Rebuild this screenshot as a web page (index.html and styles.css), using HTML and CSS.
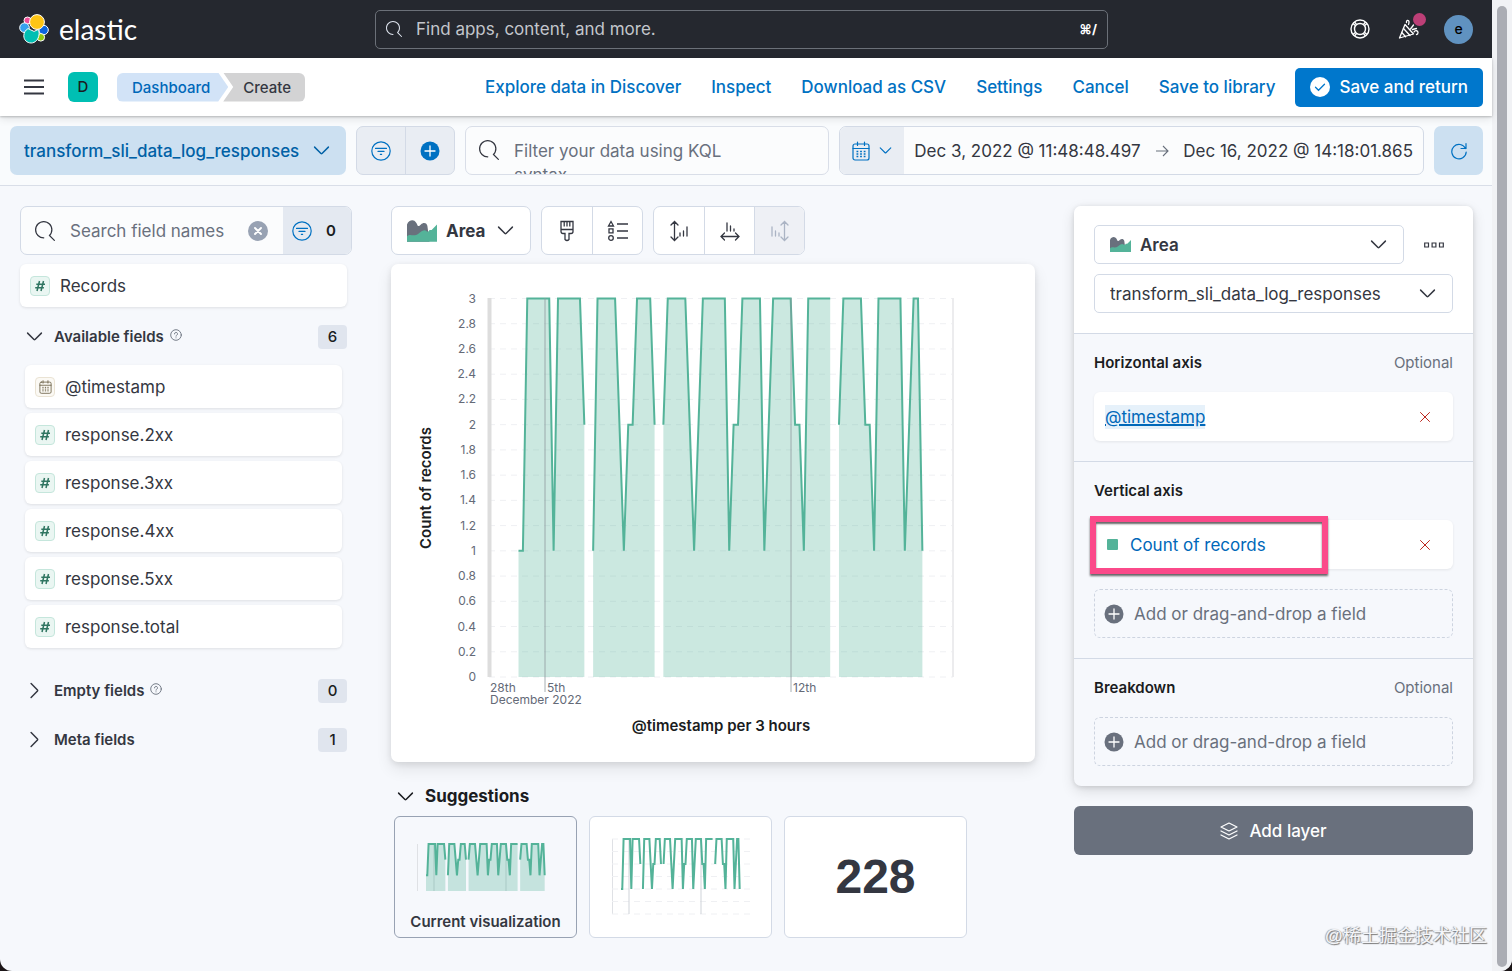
FILE: index.html
```html
<!DOCTYPE html>
<html lang="en">
<head>
<meta charset="utf-8">
<title>Create - Elastic</title>
<link rel="stylesheet" href="styles.css">
</head>
<body>

<!-- icon sprite -->
<svg class="sprite" width="0" height="0">
	<symbol id="i-down" viewBox="0 0 16 16"><path d="M1.5 4.8L7.5 10.8Q8 11.2 8.5 10.8L14.5 4.8" fill="none" stroke="currentColor" stroke-width="1.4" stroke-linecap="round"/></symbol>
	<symbol id="i-right" viewBox="0 0 16 16"><path d="M4.8 1.5L10.8 7.5Q11.2 8 10.8 8.5L4.8 14.5" fill="none" stroke="currentColor" stroke-width="1.4" stroke-linecap="round"/></symbol>
	<symbol id="i-search" viewBox="0 0 16 16"><path fill="currentColor" d="M11.271 11.978l3.872 3.873a.502.502 0 00.708 0 .502.502 0 000-.708l-3.565-3.564c2.38-2.747 2.267-6.923-.342-9.532-2.73-2.73-7.17-2.73-9.898 0-2.728 2.729-2.728 7.17 0 9.9a6.955 6.955 0 004.949 2.05.5.5 0 000-1 5.96 5.96 0 01-4.242-1.757 6.01 6.01 0 010-8.486 6.004 6.004 0 018.484 0 6.01 6.01 0 010 8.486.5.5 0 00-.034.738z"/></symbol>
	<symbol id="i-filter" viewBox="0 0 20 20"><g fill="none" stroke="currentColor" stroke-width="1.2" stroke-linecap="round"><circle cx="10" cy="10" r="9.2"/><path d="M4.5 7.4h11M7 10.4h6M9.4 13.4h1.2"/></g></symbol>
	<symbol id="i-plus" viewBox="0 0 20 20"><circle cx="10" cy="10" r="9.5" fill="currentColor"/><path d="M10 5v10M5 10h10" stroke="#fff" stroke-width="1.3" stroke-linecap="round"/></symbol>
	<symbol id="i-cross" viewBox="0 0 12 12"><path d="M1.5 1.5l9 9M10.5 1.5l-9 9" fill="none" stroke="currentColor" stroke-width="1" stroke-linecap="round"/></symbol>
	<symbol id="i-clear" viewBox="0 0 20 20"><circle cx="10" cy="10" r="10" fill="#98a2b3"/><path d="M7 7l6 6M13 7l-6 6" stroke="#fff" stroke-width="1.9" stroke-linecap="round"/></symbol>
	<symbol id="i-calendar" viewBox="0 0 18 20"><g fill="none" stroke="currentColor" stroke-width="1.2" stroke-linecap="round"><rect x="1" y="3" width="16" height="16" rx="2"/><path d="M1 7.5h16M5.5 1v3.500M12.5 1v3.500"/><path d="M4.5 10.5h9M4.5 13h9M4.5 15.5h9" stroke-width="1.4" stroke-linecap="butt" stroke-dasharray="1.8 1.8"/></g></symbol>
	<symbol id="i-area" viewBox="0 0 28 20"><path fill="#69707d" d="M0 20V4C1 1 3 0 5 0c3 0 4 3 5 5 1 1 2 0 3-1 2-2 5-2 6 1l2 15z"/><path fill="#54b399" d="M0 20v-5c2-2 4-1 6-1 4 0 5-2 8-4 2-1 3-1 4 0 1 1 2 1 3-1l2 0 5-5v16z"/></symbol>
	<symbol id="i-hash" viewBox="0 0 12 12"><path d="M5.500 1L3 11M9.500 1L7 11M2.300 4.200h8.700M1.200 7.800h8.700" fill="none" stroke="currentColor" stroke-width="1.500"/></symbol>
	<symbol id="i-help" viewBox="0 0 12 12"><g fill="none" stroke="currentColor" stroke-width=".9" stroke-linecap="round"><circle cx="6" cy="6" r="5.3"/><path d="M4.500 4.900a1.500 1.500 0 1 1 2.200 1.300c-.5.3-.7.5-.7 1M6 8.800v.1"/></g></symbol>
</svg>

<div class="window">
<div class="app">

	<header class="topbar">
		<a class="logo" href="#">
			<svg width="30" height="30" viewBox="0 0 30 30"><g stroke="#fff" stroke-width="1">
				<circle cx="8.5" cy="6.5" r="3.5" fill="#f04e98"/>
				<circle cx="5.5" cy="13.7" r="4.8" fill="#36a2ef"/>
				<circle cx="24.6" cy="16" r="4.700" fill="#0b64dd"/>
				<circle cx="21.800" cy="23.300" r="3.800" fill="#93c90e"/>
				<circle cx="18" cy="8" r="7.400" fill="#fec514"/>
				<path fill="#00bfb3" d="M9 14.600l6 2.800 4.300-1.900c.8 1.700 1 3.400.7 5.500-.6 4.600-4 8-7.800 8-4.400 0-7.400-3.200-7.400-7.200 0-3 1.600-5.700 4.200-7.200z"/>
			</g></svg>
			<span>elastic</span>
		</a>
		<label class="global-search">
			<svg width="16" height="16"><use href="#i-search"/></svg>
			<input type="search" placeholder="Find apps, content, and more." aria-label="Find apps, content, and more.">
			<kbd>⌘/</kbd>
		</label>
		<div class="top-actions">
			<button class="icon-btn" aria-label="Help">
				<svg width="20" height="20" viewBox="0 0 20 20"><g fill="none" stroke="#fff" stroke-width="1.4"><circle cx="10" cy="10" r="9"/><circle cx="10" cy="10" r="5.5"/><path d="M3 4.500l2.600 2.200M4.500 3l2.200 2.600M17 4.500l-2.600 2.200M15.500 3l-2.200 2.600M3 15.500l2.600-2.200M4.500 17l2.200-2.600M17 15.500l-2.600-2.200M15.500 17l-2.200-2.600"/></g></svg>
			</button>
			<button class="icon-btn news" aria-label="News">
				<svg width="22" height="22" viewBox="0 0 22 22"><g fill="none" stroke="#fff" stroke-width="1.3" stroke-linejoin="round" stroke-linecap="round"><path d="M1.500 20L7 6.500 15.500 16z"/><path d="M5.500 10.500l6.500 7M3.800 14.500l3.800 4.200M8.500 4.500C8 2 11 1.500 11 4c0 1.500-.5 2.500-.5 2.500M12.500 11l3-4M14.500 11.500l4-1M16 14c1-2 4-1.500 4 .5s-1 2-1.500 2"/></g></svg>
				<span class="news-dot"></span>
			</button>
			<button class="avatar" aria-label="Account">e</button>
		</div>
	</header>

	<nav class="navbar">
		<button class="icon-btn" aria-label="Menu"><svg width="20" height="16" viewBox="0 0 20 16"><path d="M0 1.500h20M0 8h20M0 14.500h20" stroke="#343741" stroke-width="2"/></svg></button>
		<span class="space">D</span>
		<div class="crumbs">
			<a class="crumb first" href="#">Dashboard</a>
			<span class="crumb last">Create</span>
		</div>
		<div class="nav-links">
			<a href="#">Explore data in Discover</a>
			<a href="#">Inspect</a>
			<a href="#">Download as CSV</a>
			<a href="#">Settings</a>
			<a href="#">Cancel</a>
			<a href="#">Save to library</a>
		</div>
		<button class="save">
			<svg width="20" height="20" viewBox="0 0 20 20"><circle cx="10" cy="10" r="10" fill="#fff"/><path d="M5.500 10.300l3 3 6-6" fill="none" stroke="#0077cc" stroke-width="1.3" stroke-linecap="round"/></svg>
			Save and return
		</button>
	</nav>

	<div class="querybar">
		<div class="pick dataview">
			<select aria-label="Data view"><option>transform_sli_data_log_responses</option></select>
			<svg width="17" height="17"><use href="#i-down"/></svg>
		</div>
		<div class="group filters">
			<button aria-label="Saved filters"><svg width="20" height="20"><use href="#i-filter"/></svg></button>
			<button aria-label="Add filter"><svg width="20" height="20"><use href="#i-plus"/></svg></button>
		</div>
		<label class="kql">
			<svg width="20" height="20"><use href="#i-search"/></svg>
			<textarea placeholder="Filter your data using KQL syntax" aria-label="Filter"></textarea>
		</label>
		<div class="dates">
			<button class="quick" aria-label="Quick dates"><svg width="18" height="20"><use href="#i-calendar"/></svg><svg width="13" height="13"><use href="#i-down"/></svg></button>
			<button class="date">Dec 3, 2022 @ 11:48:48.497</button>
			<svg width="14" height="14" viewBox="0 0 14 14"><path d="M1 7h12M8 2l5 5-5 5" fill="none" stroke="#69707d" stroke-width="1.1"/></svg>
			<button class="date">Dec 16, 2022 @ 14:18:01.865</button>
		</div>
		<button class="refresh" aria-label="Refresh"><svg width="18" height="18" viewBox="0 0 18 18"><path d="M15.500 6.500A7.200 7.200 0 1 0 16.200 10M16 1.500v5h-5" fill="none" stroke="currentColor" stroke-width="1.2" stroke-linecap="round"/></svg></button>
	</div>

	<main class="lens">

		<aside class="fields">
			<div class="field-search">
				<svg width="20" height="20"><use href="#i-search"/></svg>
				<input type="text" placeholder="Search field names" aria-label="Search field names">
				<button class="clear" aria-label="Clear"><svg width="20" height="20"><use href="#i-clear"/></svg></button>
				<button class="type-filter" aria-label="Filter by type"><svg width="20" height="20"><use href="#i-filter"/></svg><b>0</b></button>
			</div>

			<div class="field records"><span class="token"><svg width="12" height="12"><use href="#i-hash"/></svg></span>Records</div>

			<h3 class="fold"><svg width="17" height="17"><use href="#i-down"/></svg>Available fields<svg class="help" width="12" height="12"><use href="#i-help"/></svg><span class="count">6</span></h3>
			<ul class="field-list">
				<li class="field"><span class="token date-token"><svg width="13" height="14"><use href="#i-calendar"/></svg></span>@timestamp</li>
				<li class="field"><span class="token"><svg width="12" height="12"><use href="#i-hash"/></svg></span>response.2xx</li>
				<li class="field"><span class="token"><svg width="12" height="12"><use href="#i-hash"/></svg></span>response.3xx</li>
				<li class="field"><span class="token"><svg width="12" height="12"><use href="#i-hash"/></svg></span>response.4xx</li>
				<li class="field"><span class="token"><svg width="12" height="12"><use href="#i-hash"/></svg></span>response.5xx</li>
				<li class="field"><span class="token"><svg width="12" height="12"><use href="#i-hash"/></svg></span>response.total</li>
			</ul>
			<h3 class="fold"><svg width="17" height="17"><use href="#i-right"/></svg>Empty fields<svg class="help" width="12" height="12"><use href="#i-help"/></svg><span class="count">0</span></h3>
			<h3 class="fold"><svg width="17" height="17"><use href="#i-right"/></svg>Meta fields<span class="count">1</span></h3>
		</aside>

		<section class="workspace">
			<div class="toolbar">
				<div class="pick chart-type">
					<svg width="30" height="22"><use href="#i-area"/></svg>
					<select aria-label="Chart type"><option>Area</option></select>
					<svg width="17" height="17"><use href="#i-down"/></svg>
				</div>
				<div class="group">
					<button aria-label="Visual options"><svg width="16" height="22" viewBox="0 0 16 22"><g fill="none" stroke="#343741" stroke-width="1.3"><path d="M2 1.500h12v10q0 2-2 2h-2v6q-2 2-4 0v-6H4q-2 0-2-2zM2 9.500h12M5.200 1.500v5M8 1.500v5M10.800 1.500v5"/></g></svg></button>
					<button aria-label="Legend"><svg width="22" height="22" viewBox="0 0 22 22"><g fill="none" stroke="#343741" stroke-width="1.3"><path d="M4 1.500L6.500 6h-5zM2 8.800h4v4H2zM10 4h11M10 11h11M10 18h11"/><circle cx="4" cy="18" r="2.3"/></g></svg></button>
				</div>
				<div class="group">
					<button aria-label="Left axis"><svg width="20" height="22" viewBox="0 0 20 22"><g fill="none" stroke="#343741" stroke-width="1.3" stroke-linecap="round"><path d="M5.500 1.500v19M2 5l3.500-3.500L9 5M2 17l3.500 3.500L9 17M11 16v-3M14.500 16v-5M18 16V7"/></g></svg></button>
					<button aria-label="Bottom axis"><svg width="20" height="22" viewBox="0 0 20 22"><g fill="none" stroke="#343741" stroke-width="1.3" stroke-linecap="round"><path d="M1 16.500h18M4.500 13L1 16.500 4.500 20M15.500 13l3.500 3.500-3.500 3.500M7 11V3M10.500 11V6M14 11V9"/></g></svg></button>
					<button aria-label="Right axis" disabled><svg width="20" height="22" viewBox="0 0 20 22"><g fill="none" stroke="#abb4c4" stroke-width="1.3" stroke-linecap="round"><path d="M14.500 1.500v19M11 5l3.500-3.500L18 5M11 17l3.500 3.500L18 17M2 16V7M5.500 16v-5M9 16v-3"/></g></svg></button>
				</div>
			</div>

			<div class="chart-card"><svg id="chart" viewBox="0 0 644 498" role="img" aria-label="Count of records by @timestamp"></svg></div>

			<h2 class="sugg-title"><svg width="17" height="17"><use href="#i-down"/></svg>Suggestions</h2>
			<div class="suggestions">
				<button class="sugg current"><svg id="mini-area" width="181" height="93"></svg>Current visualization</button>
				<button class="sugg" aria-label="Line"><svg id="mini-line" width="181" height="119"></svg></button>
				<button class="sugg metric">228</button>
			</div>
		</section>

		<aside class="config">
			<div class="layer">
				<div class="layer-head">
					<div class="layer-row">
						<div class="pick">
							<svg width="21" height="15"><use href="#i-area"/></svg>
							<select class="strong" aria-label="Layer chart type"><option>Area</option></select>
							<svg width="17" height="17"><use href="#i-down"/></svg>
						</div>
						<button class="icon-btn more" aria-label="Layer actions"><svg width="20" height="6" viewBox="0 0 20 6"><path d="M.7 1h3.800v4H.7zM8.100 1h3.800v4H8.100zM15.500 1h3.800v4h-3.800z" fill="none" stroke="#343741" stroke-width="1.2"/></svg></button>
					</div>
					<div class="pick">
						<select aria-label="Layer data view"><option>transform_sli_data_log_responses</option></select>
						<svg width="17" height="17"><use href="#i-down"/></svg>
					</div>
				</div>
				<div class="axis">
					<h4>Horizontal axis <span>Optional</span></h4>
					<div class="dimension"><a class="focused" href="#">@timestamp</a><button class="icon-btn remove" aria-label="Remove"><svg width="12" height="12"><use href="#i-cross"/></svg></button></div>
				</div>
				<div class="axis">
					<h4>Vertical axis</h4>
					<div class="dimension"><i class="swatch"></i><a href="#">Count of records</a><button class="icon-btn remove" aria-label="Remove"><svg width="12" height="12"><use href="#i-cross"/></svg></button><span class="highlight"></span></div>
					<button class="add-field"><svg width="20" height="20"><use href="#i-plus"/></svg>Add or drag-and-drop a field</button>
				</div>
				<div class="axis">
					<h4>Breakdown <span>Optional</span></h4>
					<button class="add-field"><svg width="20" height="20"><use href="#i-plus"/></svg>Add or drag-and-drop a field</button>
				</div>
			</div>
			<button class="add-layer">
				<svg width="18" height="18" viewBox="0 0 18 18"><g fill="none" stroke="#fff" stroke-width="1.2" stroke-linejoin="round" stroke-linecap="round"><path d="M9 1l8 4-8 4-8-4zM1 9l8 4 8-4M1 13l8 4 8-4"/></g></svg>
				Add layer
			</button>
		</aside>

	</main>
</div>
<div class="scroll"><div class="thumb"></div></div>
<span class="watermark">@稀土掘金技术社区</span>
</div>

<script src="chart.js"></script>
</body>
</html>
```

FILE: styles.css
```css
* { box-sizing: border-box; }
body {
margin: 0;
background: #1b1517;
font-family: Inter, "Liberation Sans", sans-serif;
font-size: 17px;
line-height: 24px;
color: #343741;
}
a { color: #0068b9; text-decoration: none; }
button, input, select, textarea { font: inherit; color: inherit; }
button { cursor: pointer; border: 0; padding: 0; background: none; }
input, select, textarea { border: 0; padding: 0; background: none; outline: none; min-width: 0; }
select { appearance: none; cursor: pointer; }
svg { flex: none; display: block; }
ul, h2, h3, h4 { margin: 0; padding: 0; list-style: none; }
::placeholder { color: #69707d; opacity: 1; }
.sprite { position: absolute; }

.window {
position: relative;
display: flex;
min-height: 100vh;
overflow: hidden;
background: #f6f8fc;
border-radius: 0 0 12px 12px;
}
.app { flex: 1; min-width: 0; display: flex; flex-direction: column; }
.scroll { display: flex; width: 20px; padding: 6px 5px 4px; background: #f1f2f5; }
.thumb { flex: 1; border-radius: 5px; background: #abadb4; }
.watermark {
position: absolute;
right: 25px;
bottom: 22px;
font: 18px/26px "Liberation Sans", "Noto Sans CJK SC", sans-serif;
color: #f4f5f8;
text-shadow: 1px 1px 1px #777, -1px 0 1px #999;
}
.icon-btn { display: flex; align-items: center; justify-content: center; }

/* top bar */
.topbar {
display: grid;
grid-template-columns: 356px minmax(0, 733px) 1fr;
align-items: center;
height: 58px;
padding: 0 19px;
background: #25282f;
}
.logo { display: flex; align-items: center; gap: 10px; color: #fff; font: 28px/36px Lato, sans-serif; }
.global-search {
display: flex;
align-items: center;
gap: 14px;
height: 39px;
padding: 0 10px;
border: 1px solid #6b7078;
border-radius: 5px;
color: #dfe5ef;
}
.global-search input { flex: 1; }
.global-search ::placeholder { color: #c3c6cc; }
.global-search kbd { color: #fff; font: bold 13px/16px Inter, "DejaVu Sans", sans-serif; }
.top-actions { display: flex; align-items: center; justify-content: flex-end; gap: 28px; }
.news { position: relative; }
.news-dot { position: absolute; top: -5px; right: -6px; width: 13px; height: 13px; border-radius: 50%; background: #bd3f77; }
.avatar { width: 29px; height: 29px; margin-left: -4px; border-radius: 50%; background: #6092c0; color: #000; font-size: 14px; font-weight: 500; }

/* nav bar */
.navbar {
position: relative;
display: flex;
align-items: center;
height: 58px;
padding: 0 9px 0 24px;
background: #fff;
box-shadow: 0 1px 2px rgba(0,0,0,.22), 0 3px 8px rgba(0,0,0,.1);
}
.space { width: 30px; margin: 0 19px 0 24px; border-radius: 6px; background: #00bfb3; color: #1a1c21; font-size: 15px; font-weight: 500; line-height: 30px; text-align: center; }
.crumbs { display: flex; font-size: 15px; font-weight: 500; line-height: 29px; }
.crumb.first { padding: 0 18px 0 15px; border-radius: 6px 0 0 6px; background: #d2e3f7; clip-path: polygon(0 0, calc(100% - 10px) 0, 100% 50%, calc(100% - 10px) 100%, 0 100%); }
.crumb.last { margin-left: -5px; padding: 0 14px 0 20px; border-radius: 0 6px 6px 0; background: #d3d3d4; clip-path: polygon(0 0, 100% 0, 100% 100%, 0 100%, 10px 50%); }
.nav-links { display: flex; gap: 30px; margin-left: auto; font-weight: 500; }
.nav-links a { color: #0071c2; }
.save { display: flex; align-items: center; gap: 9px; height: 39px; margin-left: 20px; padding: 0 15px; border-radius: 5px; background: #0077cc; color: #fff; font-weight: 500; }

/* shared boxes */
.pick { display: flex; align-items: center; height: 39px; padding: 0 16px 0 15px; border: 1px solid #d3dae6; border-radius: 5px; background: #fff; }
.pick select { flex: 1; height: 100%; }
.group { display: flex; height: 49px; overflow: hidden; border: 1px solid #d3dae6; border-radius: 7px; background: #fff; }
.group button { display: flex; align-items: center; justify-content: center; width: 50px; }
.group button + button { border-left: 1px solid #d3dae6; }
.group button:disabled { background: #eef0f5; }

/* query bar */
.querybar {
display: grid;
grid-template-columns: 336px 99px 1fr 585px 49px;
gap: 10px;
padding: 10px 9px 10px 10px;
border-bottom: 1px solid #d9dee8;
background: #f9fbfd;
}
.dataview { height: 49px; padding-left: 14px; border: 0; border-radius: 7px; background: #cce0f1; color: #0061a6; font-weight: 500; }
.filters { background: #e9edf3; color: #0071c2; }
.kql { display: flex; gap: 15px; height: 49px; padding-left: 13px; overflow: hidden; border: 1px solid #d9dee8; border-radius: 7px; background: #fbfcfd; }
.kql svg { margin-top: 13px; }
.kql textarea { flex: 1; height: 47px; padding: 12px 60px 0 0; resize: none; overflow: hidden; }
.dates { display: flex; align-items: center; justify-content: space-between; height: 49px; padding-right: 10px; overflow: hidden; border: 1px solid #d3dae6; border-radius: 7px; background: #fbfcfd; }
.quick { display: flex; align-items: center; justify-content: center; gap: 9px; width: 64px; height: 100%; background: #e9edf3; color: #0071c2; }
.quick + .date { margin-left: -4px; }
.refresh { display: flex; align-items: center; justify-content: center; border-radius: 7px; background: #cce0f1; color: #0071c2; }

.lens {
display: grid;
grid-template-columns: 332px 1fr 399px;
align-items: start;
gap: 39px;
padding: 20px 19px 20px 20px;
}

/* fields */
.field-search { display: flex; align-items: center; height: 49px; margin-bottom: 9px; padding-left: 14px; overflow: hidden; border: 1px solid #d3dae6; border-radius: 7px; background: #fbfcfd; }
.field-search input { flex: 1; margin-left: 15px; }
.type-filter { display: flex; align-items: center; gap: 14px; width: 68px; height: 100%; margin-left: 15px; padding-left: 9px; background: #e4e9f1; color: #0071c2; }
.type-filter b { color: #1a1c21; font-size: 15px; font-weight: 600; }
.field { display: flex; align-items: center; gap: 10px; height: 43px; padding: 0 10px; border-radius: 6px; background: #fff; box-shadow: 0 1px 3px rgba(0,0,0,.1); }
.records { margin-right: 5px; }
.field-list { display: grid; gap: 5px; margin: 4px 10px 18px 5px; }
.token { display: flex; align-items: center; justify-content: center; width: 20px; height: 20px; border: 1px solid #c5e6dc; border-radius: 4px; background: #eaf6f2; color: #2f7561; }
.date-token { border-color: #eae3d4; background: #fbf9f4; color: #6b6146; }
.fold { display: flex; align-items: center; height: 49px; margin-right: 5px; padding-left: 6px; font-size: 15px; font-weight: 600; }
.fold > svg:first-child { margin-right: 11px; }
.records + .fold { margin-top: 5px; }
.help { margin: 0 0 4px 6px; color: #69707d; }
.count { margin-left: auto; width: 29px; border-radius: 4px; background: #e0e5ee; color: #1a1c21; font-weight: 500; text-align: center; }

/* workspace */
.toolbar { display: flex; gap: 10px; margin-bottom: 9px; }
.chart-type { gap: 9px; width: 140px; height: 49px; border-radius: 7px; font-weight: 700; }
.chart-card { border-radius: 7px; background: #fff; box-shadow: 0 2px 6px rgba(0,0,0,.09), 0 7px 16px rgba(0,0,0,.09); }
.chart-card svg { width: 100%; }
.chart-card text { font-size: 12px; fill: #646a77; }
.chart-card .axis-title { font-size: 15px; font-weight: 600; fill: #1a1c21; text-anchor: middle; }
.sugg-title { display: flex; align-items: center; gap: 11px; margin: 22px 0 8px 6px; font-size: 17px; font-weight: 700; line-height: 24px; color: #1a1c21; }
.suggestions { display: flex; gap: 12px; padding-left: 3px; }
.sugg { display: flex; flex-direction: column; align-items: center; width: 183px; height: 122px; border: 1px solid #d3dae6; border-radius: 6px; background: #fff; font-size: 15px; font-weight: 600; }
.current { border-color: #98a2b3; background: #f6f8fc; }
.metric { justify-content: center; font: bold 48px/56px "Liberation Sans", sans-serif; }

/* config panel */
.layer { margin-bottom: 20px; border-radius: 7px; background: #f6f8fc; box-shadow: 0 1px 5px rgba(0,0,0,.12), 0 5px 14px rgba(0,0,0,.12); }
.layer-head { display: grid; gap: 10px; padding: 19px 20px 20px; border-radius: 7px 7px 0 0; background: #fff; }
.layer-row { display: grid; grid-template-columns: 1fr 39px; gap: 10px; }
.layer-row .pick { gap: 9px; }
.strong { font-weight: 600; }
.axis { padding: 19px 20px 20px; border-top: 1px solid #d3dae6; }
.axis h4 { display: flex; justify-content: space-between; margin-bottom: 20px; font-size: 15px; font-weight: 600; line-height: 19px; color: #1a1c21; }
.axis h4 span { font-weight: 400; color: #69707d; }
.dimension { position: relative; display: flex; align-items: center; height: 49px; padding: 0 22px 0 11px; border-radius: 6px; background: #fff; box-shadow: 0 1px 3px rgba(0,0,0,.08); }
.dimension .remove { margin-left: auto; color: #bd271e; }
.focused { background: #e6f1fa; text-decoration: underline; text-decoration-thickness: 2px; }
.swatch { width: 11px; height: 11px; margin: 0 12px 0 2px; border-radius: 1px; background: #54b399; }
.highlight { position: absolute; top: -4px; left: -4px; width: 238px; height: 58px; border: 6px solid #fb4a8a; box-shadow: 0 2px 2px rgba(0,0,0,.6), inset 0 2px 2px rgba(0,0,0,.6); pointer-events: none; }
.add-field { display: flex; align-items: center; gap: 10px; width: 100%; height: 49px; padding: 0 9px; border: 1px dashed #cdd4e0; border-radius: 6px; color: #69707d; }
.dimension + .add-field { margin-top: 20px; }
.add-layer { display: flex; align-items: center; justify-content: center; gap: 11px; width: 100%; height: 49px; border-radius: 6px; background: #69707d; color: #fff; font-weight: 500; }
```

FILE: chart.js
```js
/* record counts, [3 hour bucket, count], one list per unbroken run */
var runs = [
	[[0,1],[1,1],[2,3],[7,3],[8,1],[9,3],[14,3],[15,2]],
	[[17,1],[18,3],[22,3],[24,1],[25,2],[26,2],[27,3],[30,3],[31,2]],
	[[33,2],[34,3],[38,3],[40,1],[42,3],[47,3],[48,1],[49,2],[50,2],[51,3],[55,3],[56,1],[58,3],[62,3],[63,2],[64,2],[65,1],[66,3],[71,3]],
	[[73,2],[74,3],[78,3],[79,2],[80,2],[81,1],[82,3],[87,3],[88,1],[90,3],[91,3],[92,1]]
];

function line(x1, y1, x2, y2, color, width, dash) {
	return '<path d="M' + x1 + ' ' + y1 + 'L' + x2 + ' ' + y2 + '" stroke="' + color + '" stroke-width="' + width + '"' + (dash ? ' stroke-dasharray="' + dash + '"' : '') + '/>';
}

/* x0 = first bucket, step = bucket width, y0 and y3 = heights of 0 and 3 */
function series(x0, step, y0, y3, area) {
	var out = '';
	runs.forEach(function (run) {
		var pts = run.map(function (p) {
			return (x0 + p[0] * step) + ' ' + (y0 - (y0 - y3) * p[1] / 3);
		}).join('L');
		var first = x0 + run[0][0] * step;
		var last = x0 + run[run.length - 1][0] * step;
		if (area) {
			out += '<path d="M' + first + ' ' + y0 + 'L' + pts + 'L' + last + ' ' + y0 + 'Z" fill="#54b399" fill-opacity=".3"/>';
		}
		out += '<path d="M' + pts + '" fill="none" stroke="#54b399" stroke-width="2"/>';
	});
	return out;
}

function drawMain() {
	var out = '', y0 = 413, y3 = 34.5;
	for (var i = 0; i <= 15; i++) {
		var y = y0 - (y0 - y3) * i / 15;
		out += line(98, y, 562, y, '#eff0f3', 1, '6 5');
		out += '<text x="85" y="' + (y + 4) + '" text-anchor="end">' + (i / 5) + '</text>';
	}
	out += line(98.5, 34, 98.5, 413, '#dddddd', 4);
	out += line(562, 34, 562, 413, '#ececee', 2);
	out += series(127.5, 4.39, y0, y3, true);
	out += line(154, 34, 154, 428, '#8f9aa0', 0.8) + line(400, 34, 400, 428, '#8f9aa0', 0.8);
	out += '<text x="99" y="428">28th</text><text x="156" y="428">5th</text><text x="402" y="428">12th</text>';
	out += '<text x="99" y="440">December 2022</text>';
	out += '<text class="axis-title" x="330" y="467">@timestamp per 3 hours</text>';
	out += '<text class="axis-title" transform="translate(40 224) rotate(-90)">Count of records</text>';
	document.getElementById('chart').innerHTML = out;
}

function drawMini(id, y0, y3, area) {
	var out = line(22.5, y3, 22.5, y0, '#dfe1e5', 1);
	if (!area) {
		for (var i = 0; i <= 6; i++) {
			out += line(22, y0 - (y0 - y3) * i / 6, 160, y0 - (y0 - y3) * i / 6, '#eff0f3', 1, '6 5');
		}
	}
	out += line(39, y3, 39, y0, '#cfd3d9', 1) + line(111, y3, 111, y0, '#cfd3d9', 1);
	out += series(31, 1.29, y0, y3, area);
	document.getElementById(id).innerHTML = out;
}

drawMain();
drawMini('mini-area', 74, 27, true);
drawMini('mini-line', 97, 22, false);
```
